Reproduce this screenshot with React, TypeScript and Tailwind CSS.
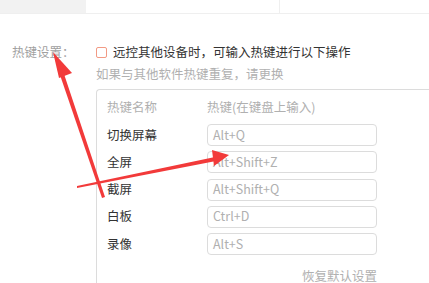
import React from "react";

const font = { fontFamily: '"Noto Sans CJK SC", "Noto Sans", sans-serif' };

const rows = [
  ["切换屏幕", "Alt+Q"],
  ["全屏", "Alt+Shift+Z"],
  ["截屏", "Alt+Shift+Q"],
  ["白板", "Ctrl+D"],
  ["录像", "Alt+S"],
];

export default function App() {
  return (
    <div
      className="relative w-[429px] h-[283px] overflow-hidden bg-white text-[12.5px] text-[#333]"
      style={font}
    >
      <div className="flex h-[14px] border-b border-[#efefef]">
        <div className="w-[86px] bg-[#f2f2f2]" />
        <div className="w-[194px] border-r border-[#efefef] overflow-hidden">
          <div className="mt-[-16px] ml-[28px] text-[13px] leading-[18px] text-[#666]">远程设置</div>
        </div>
        <div className="flex-1 overflow-hidden">
          <div className="mt-[-16px] ml-[22px] text-[13px] leading-[18px] text-[#666]">其他设置</div>
        </div>
      </div>
      <div className="flex pt-[28px]">
        <div className="w-[96px] pl-[12px] leading-[20px] text-[#a0a0a0]">热键设置：</div>
        <div className="flex-1">
          <div className="flex h-[20px] items-center gap-[6px]">
            <div className="w-[11px] h-[11px] border border-[#f29a84] rounded-[2px]" />
            <span>远控其他设备时，可输入热键进行以下操作</span>
          </div>
          <div className="mt-[2px] leading-[20px] text-[#b0b0b0]">如果与其他软件热键重复，请更换</div>
          <div className="mt-[5px] border-l border-t border-[#dcdcdc] rounded-tl-[4px] pl-[10px] pt-[7px] h-[200px]">
            <div className="flex leading-[20px] text-[#b0b0b0]">
              <div className="w-[100px]">热键名称</div>
              <div>热键(在键盘上输入)</div>
            </div>
            <div className="mt-[7px] flex flex-col gap-[5.25px]">
              {rows.map(([name, key]) => (
                <div key={name} className="flex items-center h-[22px]">
                  <div className="w-[100px]">{name}</div>
                  <div className="w-[170px] h-[22px] border border-[#dcdcdc] rounded-[4px] pl-[5px] flex items-center text-[#b0b0b0]">
                    {key}
                  </div>
                </div>
              ))}
            </div>
            <div className="w-[270px] mt-[11px] text-right leading-[20px] text-[#b0b0b0]">恢复默认设置</div>
          </div>
        </div>
      </div>
      <svg className="absolute inset-0 pointer-events-none" width="429" height="283" viewBox="0 0 429 283">
        <g fill="#f23a3a" stroke="none">
          <polygon points="102,198 105,197 64,74 60,75" />
          <polygon points="53,52 72,73 59,78" />
          <polygon points="77,186 77,188 216,161 215,157" />
          <polygon points="229,155 212,150 214,166" />
        </g>
      </svg>
    </div>
  );
}
